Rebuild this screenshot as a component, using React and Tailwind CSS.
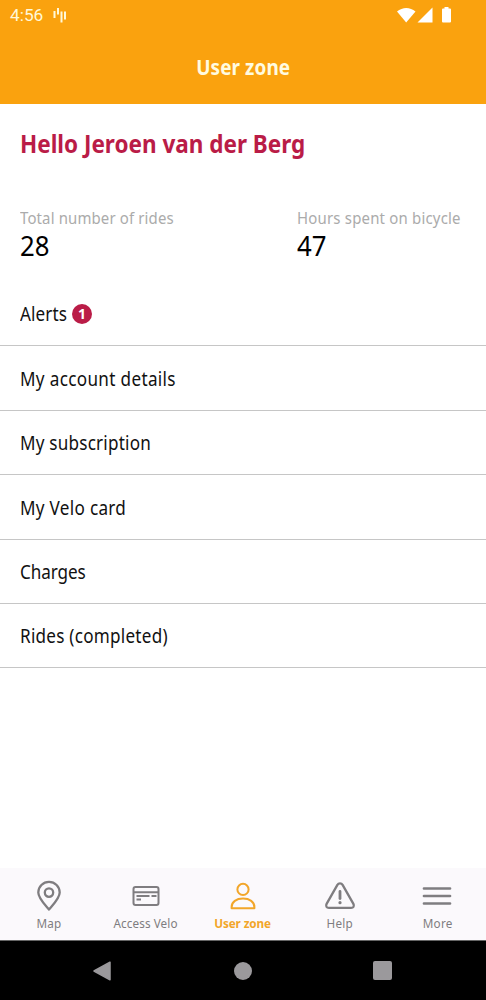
import React, { useState } from 'react';

const menuItems = [
    { label: 'Alerts', badge: 1, spacing: 'tracking-[0.1px]', width: 'w-[47px]' },
    { label: 'My account details', spacing: 'tracking-[0.38px]' },
    { label: 'My subscription', spacing: 'tracking-[0.24px]' },
    { label: 'My Velo card', spacing: 'tracking-[0.34px]' },
    { label: 'Charges', spacing: 'tracking-[-0.1px]' },
    { label: 'Rides (completed)', spacing: 'tracking-[0.28px]' },
];

const tabs = [
    { label: 'Map', Icon: PinIcon, spacing: 'tracking-[0.3px]' },
    { label: 'Access Velo', Icon: CardIcon, spacing: 'tracking-[0.1px]' },
    { label: 'User zone', Icon: UserIcon, spacing: 'tracking-[-0.1px]' },
    { label: 'Help', Icon: WarningIcon, spacing: 'tracking-[0.3px]' },
    { label: 'More', Icon: MenuIcon, spacing: 'tracking-[0.3px]' },
];

function PinIcon() {
    return (
        <svg width="32" height="32" viewBox="0 0 32 32" fill="none" stroke="currentColor" strokeWidth="2.3">
            <path d="M16 29.6C11.8 24.6 5.3 18.3 5.3 12.6a10.7 10.7 0 0 1 21.4 0C26.7 18.3 20.2 24.6 16 29.6Z" strokeLinejoin="round" />
            <circle cx="16" cy="12.6" r="4.2" />
        </svg>
    );
}

function CardIcon() {
    return (
        <svg width="32" height="32" viewBox="0 0 32 32" fill="none" stroke="currentColor" strokeWidth="2">
            <rect x="3.5" y="7" width="25" height="18" rx="2" />
            <path d="M3.5 12.3h25M6.5 16h13M21.5 16h5M6.5 19.5h4.5" />
        </svg>
    );
}

function UserIcon() {
    return (
        <svg width="32" height="32" viewBox="0 0 32 32" fill="none" stroke="currentColor" strokeWidth="2">
            <circle cx="16" cy="9.4" r="5.6" />
            <path d="M4.6 28.2v-1C4.6 21.8 9.4 18.6 16 18.6s11.4 3.2 11.4 8.6v1Z" strokeLinejoin="round" />
        </svg>
    );
}

function WarningIcon() {
    return (
        <svg width="32" height="32" viewBox="0 0 32 32" fill="none" stroke="currentColor" strokeWidth="2.3">
            <path d="M13.4 4.9 2.6 23.9c-1.2 2.3 0 4 2.3 4h22.2c2.3 0 3.5-1.7 2.3-4L18.6 4.9c-1.2-2-4-2-5.2 0Z" strokeLinejoin="round" />
            <path d="M16 11.5v7" strokeWidth="2.8" strokeLinecap="round" />
            <circle cx="16" cy="22.7" r="1.6" fill="currentColor" stroke="none" />
        </svg>
    );
}

function MenuIcon() {
    return (
        <svg width="32" height="32" viewBox="0 0 32 32" fill="none" stroke="currentColor" strokeWidth="2.7" strokeLinecap="round">
            <path d="M3 8.5h26M3 16h26M3 23.5h26" />
        </svg>
    );
}

function StatusBar() {
    return (
        <div className="h-[30px] flex items-center justify-between pl-2.5 pr-[34px] text-[#fff8d8]">
            <div className="flex items-center gap-[9px]">
                <span className="font-[Roboto] text-[17.3px] leading-[32px]">4:56</span>
                <svg width="15" height="16" viewBox="0 0 15 16" stroke="currentColor" strokeWidth="2">
                    <path d="M2.5 4v7M6 1v6.5M9.5 4.5v11M13 4.5v8" />
                </svg>
            </div>
            <svg width="55" height="18" viewBox="0 0 55 18" fill="white">
                <path d="M0 5.5C5.5.7 13 .7 18.5 5.5L9.2 16.5Z" />
                <path d="M35.5 1.5V16.5H20.5Z" />
                <path d="M47.5 1h4v1.5h1.5q1 0 1 1V15.5q0 1-1 1h-7q-1 0-1-1V3.5q0-1 1-1h1.5Z" />
            </svg>
        </div>
    );
}

export default function App() {
    const [activeTab, setActiveTab] = useState('User zone');

    return (
        <div className="w-full h-[1000px] flex flex-col overflow-hidden bg-white font-['Noto_Sans',sans-serif] whitespace-nowrap">
            {/* Header */}
            <header className="h-[104px] shrink-0 bg-[#faa20e]">
                <StatusBar />
                <h1 className="h-[74px] text-center text-[21px] font-bold leading-[74px] text-[#fffbe0]">
                    <span className="inline-block scale-x-[0.9] tracking-[0.1px]">User zone</span>
                </h1>
            </header>

            <main className="flex-1">
                <h2 className="mt-[23px] pl-5 h-8 text-[25px] leading-8 font-bold text-[#ba1c47]">
                    <span className="inline-block origin-left scale-x-[0.9]">Hello Jeroen van der Berg</span>
                </h2>

                {/* Ride totals */}
                <div className="mt-12 flex h-[54px] pl-5">
                    <div className="w-[277px]">
                        <p className="text-[17px] leading-[22px] text-[#ababab]">
                            <span className="inline-block origin-left scale-x-[0.88] tracking-[0.15px]">Total number of rides</span>
                        </p>
                        <p className="text-[28px] leading-8">
                            <span className="inline-block origin-left scale-x-[0.92]">28</span>
                        </p>
                    </div>
                    <div>
                        <p className="text-[17px] leading-[22px] text-[#ababab]">
                            <span className="inline-block origin-left scale-x-[0.88] tracking-[0.22px]">Hours spent on bicycle</span>
                        </p>
                        <p className="text-[28px] leading-8">
                            <span className="inline-block origin-left scale-x-[0.92]">47</span>
                        </p>
                    </div>
                </div>

                {/* Menu */}
                <ul className="mt-[21px] text-[19px] text-[#111]">
                    {menuItems.map(({ label, badge, spacing, width }) => (
                        <li key={label} className="h-[64.4px] pl-5 flex items-center gap-[5px] border-b border-[#c6c6c6]">
                            <span className={`pt-0.5 ${width || ''}`}>
                                <span className={`inline-block origin-left scale-x-[0.9] ${spacing}`}>{label}</span>
                            </span>
                            {badge && (
                                <span className="size-5 rounded-full bg-[#ba1c47] text-white text-sm font-bold flex items-center justify-center">
                                    {badge}
                                </span>
                            )}
                        </li>
                    ))}
                </ul>
            </main>

            {/* Tab bar */}
            <nav className="h-[73px] shrink-0 grid grid-cols-5 bg-[#fbf9fc] border-b border-[#666]">
                {tabs.map(({ label, Icon, spacing }) => (
                    <button
                        key={label}
                        onClick={() => setActiveTab(label)}
                        className={`flex flex-col items-center pt-3 text-[13px] leading-[23px] ${activeTab === label ? 'text-[#f2a62a] font-bold' : 'text-[#7f7d80]'}`}
                    >
                        <Icon />
                        <span className={`inline-block scale-x-[0.9] ${spacing}`}>{label}</span>
                    </button>
                ))}
            </nav>

            {/* Android buttons */}
            <div className="h-[59px] shrink-0 bg-black flex justify-center items-center gap-[121px] text-[#9b999c]">
                <svg className="-ml-0.5" width="20" height="20" viewBox="0 0 20 20" fill="currentColor" stroke="currentColor" strokeWidth="1.5" strokeLinejoin="round">
                    <path d="M1 10 17 1.2v17.6Z" />
                </svg>
                <span className="size-[18px] rounded-full bg-current" />
                <span className="size-[19px] rounded-[2px] bg-current" />
            </div>
        </div>
    );
}
